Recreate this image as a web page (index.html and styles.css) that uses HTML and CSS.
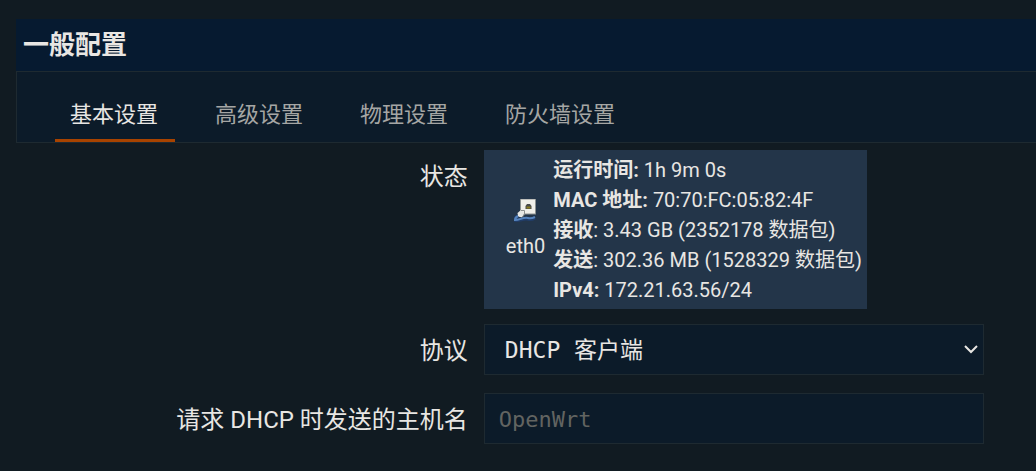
FILE: index.html
```html
<!DOCTYPE html>
<html lang="zh-CN">
<head>
<meta charset="utf-8">
<meta name="viewport" content="width=device-width, initial-scale=1">
<title>一般配置</title>
<link rel="stylesheet" href="styles.css">
</head>
<body>
<main class="section">
  <h3 class="section-title">一般配置</h3>
  <nav class="tabs">
    <a class="tab tab-active" href="#general" aria-current="page">基本设置</a>
    <a class="tab" href="#advanced">高级设置</a>
    <a class="tab" href="#physical">物理设置</a>
    <a class="tab" href="#firewall">防火墙设置</a>
  </nav>
  <form class="form">
    <div class="row">
      <div class="label">状态</div>
      <div class="status">
        <div class="device">
          <svg class="device-icon" viewBox="0 0 24 24" aria-hidden="true">
            <path d="M6 0h16v15.500H6z" fill="#8b908f"/>
            <path d="M7 .5h14v14H7z" fill="#f0efe9"/>
            <path d="M11.500 7l1.500-2h3l1.500 2v3h-6z" fill="#484a4b"/>
            <path d="M12.500 7.500h4v2h-4z" fill="#8b7d20"/>
            <path d="M3.500 14l3.500-3 3.500 3-2.500 4.500-4-1z" fill="#e6e7e3"/>
            <path d="M7 11.500h3.500v4L8 18.500" fill="none" stroke="#8d908e"/>
            <path d="M4 17c-2 1-3 2-3 4 5 1 8-2 13-1 3 1 5 0 7-1" fill="none" stroke="#213d68" stroke-width="3.500"/>
            <path d="M4 17c-2 1-3 2-3 4 5 0 8-3 13-2 3 1 5 0 7-1" fill="none" stroke="#5583bd" stroke-width="2"/>
          </svg>
          <span>eth0</span>
        </div>
        <div class="details">
          <div><strong>运行时间:</strong> 1h 9m 0s</div>
          <div><strong>MAC 地址:</strong> 70:70:FC:05:82:4F</div>
          <div><strong>接收</strong>: 3.43 GB (2352178 数据包)</div>
          <div><strong>发送</strong>: 302.36 MB (1528329 数据包)</div>
          <div><strong>IPv4:</strong> 172.21.63.56/24</div>
        </div>
      </div>
    </div>
    <div class="row">
      <label class="label" for="protocol">协议</label>
      <div class="field">
        <select class="control select" id="protocol"><option>DHCP 客户端</option></select>
        <svg class="chevron" viewBox="0 0 16 10" aria-hidden="true"><path d="M2 2l6 6 6-6" fill="none" stroke="currentColor" stroke-width="2"/></svg>
      </div>
    </div>
    <div class="row">
      <label class="label" for="hostname">请求 DHCP 时发送的主机名</label>
      <div class="field">
        <input class="control input" id="hostname" type="text" placeholder="OpenWrt">
      </div>
    </div>
  </form>
</main>
</body>
</html>
```
FILE: styles.css
```css
* { box-sizing: border-box; }

body {
  margin: 0;
  background: #111b22;
  color: #e8e6e3;
  font-family: Roboto, "Noto Sans CJK SC", sans-serif;
}

.section { padding: 19px 0 24px 16px; }

.section-title {
  margin: 0;
  padding: 6px 7px;
  background: #061a30;
  font-size: 26px;
  line-height: 40px;
}

.tabs {
  display: flex;
  gap: 25px;
  padding: 19px 38px 0;
  border: 1px solid #1e2a31;
  border-right: 0;
  background: #0c1b29;
}

.tab {
  padding: 0 17px 0 15px;
  border-bottom: 3px solid transparent;
  color: #a5a6a4;
  font-size: 22px;
  line-height: 48px;
  text-decoration: none;
}

.tab-active {
  border-color: #a84300;
  color: #e8e6e3;
}

.form {
  display: flex;
  flex-direction: column;
  padding-top: 7px;
}

.row {
  display: flex;
  gap: 16px;
  margin-bottom: 17px;
}

.row:first-child { margin-bottom: 15px; }

.label {
  flex: 0 0 44.3%;
  padding-top: 2px;
  font-size: 24px;
  line-height: 50px;
  text-align: right;
}

.status {
  display: flex;
  align-items: center;
  gap: 8px;
  padding: 5px 5px 4px 22px;
  background: #233549;
  font-size: 20px;
  line-height: 30px;
}

.device {
  display: flex;
  flex-direction: column;
  align-items: center;
  gap: 8px;
}

.device-icon {
  width: 24px;
  height: 24px;
}

.field {
  position: relative;
  flex: 0 1 500px;
  height: 51px;
}

.control {
  width: 100%;
  height: 100%;
  margin: 0;
  border: 1px solid #1e2a31;
  border-radius: 0;
  background: #0c1b29;
  color: #e8e6e3;
  font-family: "DejaVu Sans Mono", "Noto Sans CJK SC", monospace;
}

.select {
  appearance: none;
  padding: 0 40px 0 20px;
  font-size: 23px;
}

.input {
  padding: 2px 14px 0;
  font-size: 22px;
}

.input::placeholder {
  color: #626461;
  opacity: 1;
}

.chevron {
  position: absolute;
  top: 20px;
  right: 5px;
  width: 16px;
  height: 10px;
  pointer-events: none;
}
```
